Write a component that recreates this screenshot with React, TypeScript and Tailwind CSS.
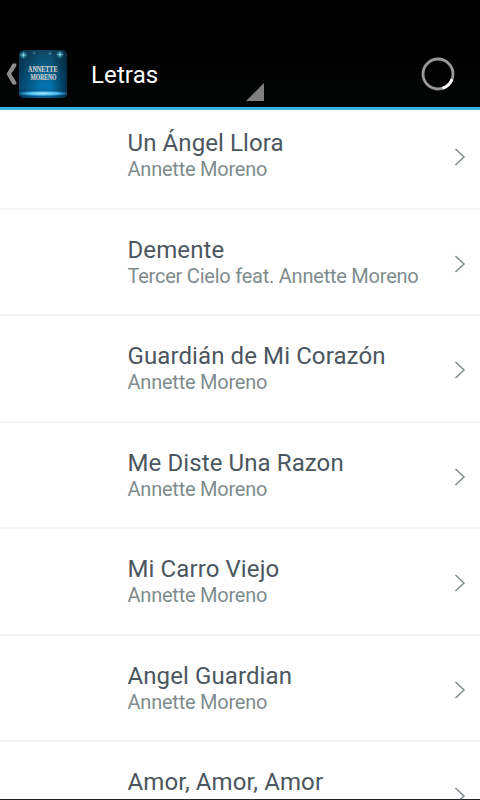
type Song = {
    title: string;
    artist?: string;
};

const songs: Song[] = [
    { title: "Un Ángel Llora", artist: "Annette Moreno" },
    { title: "Demente", artist: "Tercer Cielo feat. Annette Moreno" },
    { title: "Guardián de Mi Corazón", artist: "Annette Moreno" },
    { title: "Me Diste Una Razon", artist: "Annette Moreno" },
    { title: "Mi Carro Viejo", artist: "Annette Moreno" },
    { title: "Angel Guardian", artist: "Annette Moreno" },
    { title: "Amor, Amor, Amor" },
];

function AppIcon() {
    return (
        <svg width="48" height="48" viewBox="0 0 48 48" className="shrink-0">
            <defs>
                <linearGradient id="sky" x1="0" y1="0" x2="0" y2="1">
                    <stop offset="0" stopColor="#124560" />
                    <stop offset="0.4" stopColor="#07608c" />
                    <stop offset="0.75" stopColor="#0575b0" />
                    <stop offset="1" stopColor="#045c90" />
                </linearGradient>
                <linearGradient id="sides" x1="0" y1="0" x2="1" y2="0">
                    <stop offset="0" stopColor="#021a2c" stopOpacity="0.55" />
                    <stop offset="0.45" stopColor="#021a2c" stopOpacity="0" />
                    <stop offset="0.65" stopColor="#021a2c" stopOpacity="0" />
                    <stop offset="1" stopColor="#021a2c" stopOpacity="0.75" />
                </linearGradient>
                <radialGradient id="floor">
                    <stop offset="0" stopColor="#b4eeff" />
                    <stop offset="0.55" stopColor="#4fc0f5" stopOpacity="0.9" />
                    <stop offset="1" stopColor="#1b86c8" stopOpacity="0" />
                </radialGradient>
                <radialGradient id="spark">
                    <stop offset="0" stopColor="#a5f2fb" />
                    <stop offset="0.4" stopColor="#4cb8d0" stopOpacity="0.5" />
                    <stop offset="1" stopColor="#2aa0c0" stopOpacity="0" />
                </radialGradient>
                <clipPath id="tile">
                    <rect width="48" height="48" rx="5" />
                </clipPath>
            </defs>
            <g clipPath="url(#tile)">
                <rect width="48" height="48" fill="url(#sky)" />
                <rect width="48" height="48" fill="url(#sides)" />
                <ellipse cx="24" cy="43.5" rx="29" ry="3" fill="url(#floor)" />
                <circle cx="4.5" cy="5" r="4.5" fill="url(#spark)" />
                <circle cx="41" cy="4.5" r="4.5" fill="url(#spark)" />
                <circle cx="15" cy="3" r="2.5" fill="url(#spark)" opacity="0.4" />
                <circle cx="31" cy="3.5" r="2.5" fill="url(#spark)" opacity="0.6" />
                <path d="M4.5 2v6M1.5 5h6M41 1.5v6M38 4.5h6" stroke="#a5e8f5" strokeWidth="0.4" />
            </g>
            <g fill="#d6d0cc" stroke="#d6d0cc" strokeWidth="0.15" fontFamily="'Liberation Serif', serif" fontWeight="700" fontSize="7.2">
                <text x="9" y="22" textLength="29.5" lengthAdjust="spacingAndGlyphs">ANNETTE</text>
                <text x="11.5" y="30" textLength="26" lengthAdjust="spacingAndGlyphs">MORENO</text>
            </g>
        </svg>
    );
}

function Header() {
    return (
        <header className="h-[110px] shrink-0 border-b-[3px] border-[#33b5e5] bg-gradient-to-b from-black to-[#040606] pt-[41px]">
            <div className="flex h-[66px] items-center">
                <svg width="19" height="48" viewBox="0 0 19 48" className="shrink-0">
                    <path d="M12.7 13.5H16.3V16L11.2 24L16.3 32V34.5H12.7L6.5 24Z" fill="#8c8c8c" />
                </svg>
                <AppIcon />
                <div className="ml-[16px] flex h-full w-[181px] items-center justify-between pl-[8px]">
                    <h1 className="mt-[2px] text-[24px] leading-[28px] tracking-[0.12px] text-white">Letras</h1>
                    <svg width="18" height="18" viewBox="0 0 18 18" className="mb-[6px] self-end">
                        <path d="M18 0V18H0Z" fill="#808080" />
                    </svg>
                </div>
                <svg width="34" height="34" viewBox="0 0 34 34" className="mr-[25px] ml-auto">
                    <circle cx="17" cy="17" r="15" fill="none" stroke="#999" strokeWidth="2.8" />
                    <path d="M31 22.2A15 15 0 0 1 21.5 31.3" fill="none" stroke="#fff" strokeWidth="2.8" />
                </svg>
            </div>
        </header>
    );
}

function SongRow({ song }: { song: Song }) {
    return (
        <li className="flex h-[106.5px] shrink-0 items-center border-b-2 border-[#f3f4f4] pr-[14px] pl-[127.5px]">
            <div className="-mt-[0.6px] flex-1 whitespace-nowrap">
                <p className="text-[24px] leading-[28px] tracking-[0.1px] text-[#4b565f]">{song.title}</p>
                <p className="h-6 text-[20px] leading-[24px] tracking-[-0.23px] text-[#7f8c8d]">{song.artist}</p>
            </div>
            <svg width="12" height="18" viewBox="0 0 12 18" className="mt-[3.4px]">
                <path d="M1.5 1L10 9L1.5 17" fill="none" stroke="#7f8c8d" strokeWidth="1.5" />
            </svg>
        </li>
    );
}

export default function App() {
    return (
        <div className="flex h-[800px] w-[480px] flex-col overflow-hidden bg-white font-['Roboto',sans-serif]">
            <Header />
            <main className="min-h-0 flex-1 overflow-hidden border-b border-[#222529]">
                <ul className="-mt-[6.8px] flex flex-col">
                    {songs.map((song) => (
                        <SongRow key={song.title} song={song} />
                    ))}
                </ul>
            </main>
        </div>
    );
}
